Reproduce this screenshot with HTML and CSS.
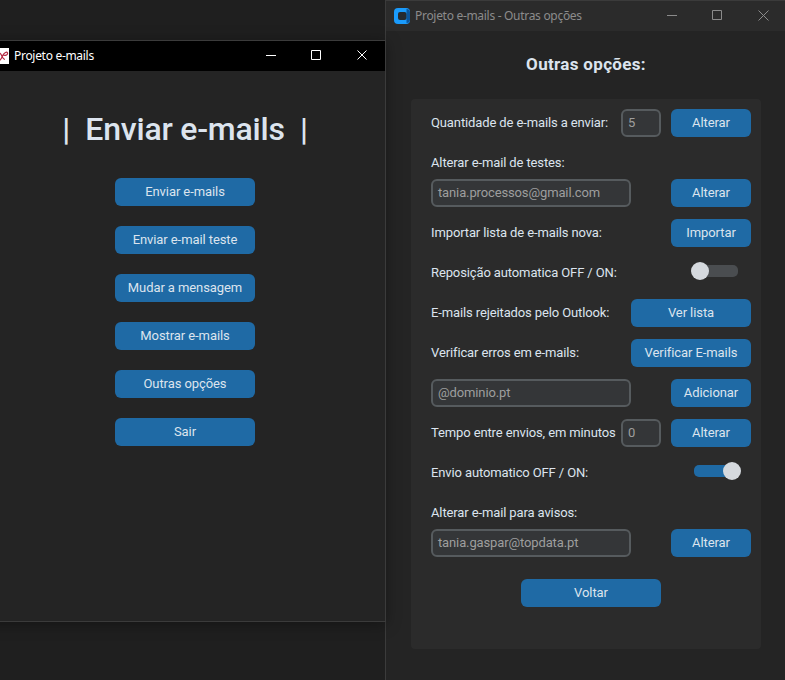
FILE: index.html
```html
<!DOCTYPE html>
<html lang="pt">
<head>
<meta charset="utf-8">
<title>Projeto e-mails</title>
<link rel="stylesheet" href="styles.css">
</head>
<body>
<main class="desktop">
  <section class="window window-options">
    <header class="titlebar">
      <svg class="app-icon" width="16" height="16" viewBox="0 0 16 16"><rect width="16" height="16" rx="4" fill="#1a9bfc"/><path d="M12.500 1a3.500 3.500 0 0 1 3.500 3.500v7a3.500 3.500 0 0 1-3.500 3.500z" fill="#0b559c"/><rect x="4" y="4" width="8.500" height="8" rx="2" fill="#252a30"/></svg>
      <span class="caption">Projeto e-mails - Outras opções</span>
      <svg class="controls" width="138" height="30" viewBox="0 0 138 30"><path d="M18 14.500h10M63.500 9.500h9v9h-9zM109.500 9.500l10 10M119.500 9.500l-10 10"/></svg>
    </header>
    <h2 class="options-title">Outras opções:</h2>
    <div class="panel">
      <div class="row"><span class="label">Quantidade de e-mails a enviar:</span><div class="entry small">5</div><button class="btn narrow">Alterar</button></div>
      <div class="row tight"><span class="label">Alterar e-mail de testes:</span></div>
      <div class="row"><div class="entry">tania.processos@gmail.com</div><button class="btn narrow">Alterar</button></div>
      <div class="row"><span class="label">Importar lista de e-mails nova:</span><button class="btn narrow">Importar</button></div>
      <div class="row"><span class="label">Reposição automatica OFF / ON:</span><span class="switch"></span></div>
      <div class="row"><span class="label">E-mails rejeitados pelo Outlook:</span><button class="btn medium">Ver lista</button></div>
      <div class="row"><span class="label">Verificar erros em e-mails:</span><button class="btn medium">Verificar E-mails</button></div>
      <div class="row"><div class="entry">@dominio.pt</div><button class="btn narrow">Adicionar</button></div>
      <div class="row"><span class="label">Tempo entre envios, em minutos</span><div class="entry small">0</div><button class="btn narrow">Alterar</button></div>
      <div class="row"><span class="label">Envio automatico OFF / ON:</span><span class="switch on"></span></div>
      <div class="row tight"><span class="label">Alterar e-mail para avisos:</span></div>
      <div class="row last"><div class="entry">tania.gaspar@topdata.pt</div><button class="btn narrow">Alterar</button></div>
      <button class="btn back">Voltar</button>
    </div>
  </section>

  <section class="window window-main">
    <header class="titlebar">
      <svg class="app-icon" width="16" height="16" viewBox="0 0 16 16"><rect width="16" height="16" fill="#fff"/><path d="M5 4.500c3 0 3 2 4 4s1.500 3 3 3M6 13c2-1 3-4 4-6s4-4 4.500-2-2.500 3-4.500 2" fill="none" stroke="#b52a43" stroke-width="1.200"/></svg>
      <span class="caption">Projeto e-mails</span>
      <svg class="controls" width="138" height="30" viewBox="0 0 138 30"><path d="M18 14.500h10M63.500 9.500h9v9h-9zM109.500 9.500l9 9M118.500 9.500l-9 9"/></svg>
    </header>
    <h1 class="main-title">|&nbsp; Enviar e-mails &nbsp;|</h1>
    <nav class="menu">
      <button class="btn">Enviar e-mails</button>
      <button class="btn">Enviar e-mail teste</button>
      <button class="btn">Mudar a mensagem</button>
      <button class="btn">Mostrar e-mails</button>
      <button class="btn">Outras opções</button>
      <button class="btn">Sair</button>
    </nav>
  </section>
</main>
</body>
</html>
```
FILE: styles.css
```css
* { box-sizing: border-box; }

body {
  margin: 0;
  background: #1f1f1f;
  color: #dce4ee;
  font: 13px/28px Roboto, sans-serif;
}

.desktop {
  position: relative;
  width: 785px;
  height: 680px;
  overflow: hidden;
}

.window {
  position: absolute;
  background: #242424;
  border: 1px solid #3b3b3b;
}

.window-options {
  left: 385px;
  top: 0;
  width: 402px;
  height: 700px;
}

.window-main {
  left: -16px;
  top: 40px;
  width: 402px;
  height: 582px;
  box-shadow: 0 2px 14px rgba(0, 0, 0, .35);
}

.titlebar {
  display: flex;
  align-items: center;
  height: 30px;
  padding-left: 8px;
  background: #2b2b2b;
  color: #8b8b8b;
  font: 12px/30px "Noto Sans", sans-serif;
}

.window-main .titlebar {
  background: #000;
  color: #fff;
}

.app-icon { margin-right: 5px; }

.caption { letter-spacing: -.3px; }

.controls {
  margin-left: auto;
  margin-right: -1px;
  fill: none;
  stroke: currentColor;
}

.main-title {
  margin: 36px 0 0;
  text-align: center;
  font-size: 32px;
  font-weight: 500;
  line-height: 44px;
  letter-spacing: -.22px;
}

.menu {
  display: flex;
  flex-direction: column;
  align-items: center;
  gap: 20px;
  margin-top: 27px;
}

.btn {
  width: 140px;
  height: 28px;
  padding: 0;
  border: 0;
  border-radius: 6px;
  background: #1f6aa5;
  color: #dce4ee;
  font: 13px/28px Roboto, sans-serif;
  letter-spacing: -.08px;
}

.narrow { width: 80px; }
.medium { width: 120px; }

.options-title {
  margin: 19px 0 0;
  text-align: center;
  font-size: 17px;
  font-weight: 700;
  line-height: 28px;
  letter-spacing: .32px;
}

.panel {
  width: 350px;
  height: 550px;
  margin: 21px 0 0 25px;
  padding: 10px 10px 0 20px;
  border-radius: 4px;
  background: #2b2b2b;
}

.row {
  display: flex;
  height: 28px;
  margin-bottom: 12px;
}

.row.tight { margin-bottom: 2px; }
.row.last { margin-bottom: 22px; }

.label {
  flex: 1;
  white-space: nowrap;
  letter-spacing: -.12px;
}

.entry {
  width: 200px;
  padding-left: 5px;
  border: 2px solid #565b5e;
  border-radius: 6px;
  background: #343638;
  color: #9e9e9e;
  line-height: 24px;
  letter-spacing: -.13px;
}

.entry.small {
  width: 40px;
  margin-right: 10px;
}

.row > .btn { margin-left: auto; }

.back {
  display: block;
  margin-left: 90px;
}

.switch {
  display: flex;
  align-items: center;
  width: 44px;
  height: 12px;
  margin: 6px 13px 0 0;
  border-radius: 5px;
  background: #4a4d50;
}

.switch::before {
  content: "";
  width: 18px;
  height: 18px;
  margin-left: -3px;
  border-radius: 50%;
  background: #d5d9de;
  flex: none;
}

.switch.on {
  background: #1f6aa5;
}

.switch.on::before { margin-left: 29px; }
```
